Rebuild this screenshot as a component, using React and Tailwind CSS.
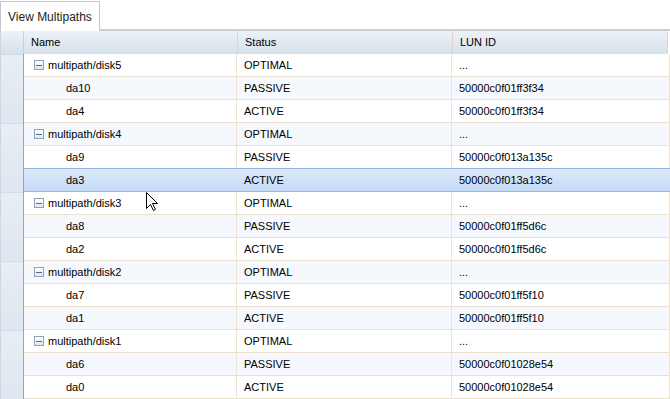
import React from "react";

const groups = [
  { name: "multipath/disk5", kids: [["da10", "PASSIVE", "50000c0f01ff3f34"], ["da4", "ACTIVE", "50000c0f01ff3f34"]] },
  { name: "multipath/disk4", kids: [["da9", "PASSIVE", "50000c0f013a135c"], ["da3", "ACTIVE", "50000c0f013a135c"]] },
  { name: "multipath/disk3", kids: [["da8", "PASSIVE", "50000c0f01ff5d6c"], ["da2", "ACTIVE", "50000c0f01ff5d6c"]] },
  { name: "multipath/disk2", kids: [["da7", "PASSIVE", "50000c0f01ff5f10"], ["da1", "ACTIVE", "50000c0f01ff5f10"]] },
  { name: "multipath/disk1", kids: [["da6", "PASSIVE", "50000c0f01028e54"], ["da0", "ACTIVE", "50000c0f01028e54"]] },
];

// flatten groups into grid rows
const rows = [];
groups.forEach((g) => {
  rows.push({ group: true, name: g.name, status: "OPTIMAL", lun: "..." });
  g.kids.forEach(([name, status, lun]) => rows.push({ group: false, name, status, lun }));
});

const SELECTED = "da3";

const MinusBox = () => (
  <span className="inline-flex items-center justify-center w-[10px] h-[10px] mr-[4px] border border-[#8fa2ba] bg-gradient-to-b from-white to-[#dfe7f1]">
    <span className="block w-[6px] h-[1px] bg-[#4f6b8f]" />
  </span>
);

const Cursor = () => (
  <svg className="absolute left-[146px] top-[192px]" width="13" height="20" viewBox="0 0 13 20">
    <path
      d="M0.5 0.5 L0.5 16.5 L4.5 12.5 L7.5 18.5 L9.5 17.5 L6.5 11.5 L11.5 11.5 Z"
      fill="#fff"
      stroke="#000"
      strokeWidth="1"
      strokeLinejoin="miter"
    />
  </svg>
);

export default function App() {
  return (
    <div className="relative w-[670px] h-[399px] overflow-hidden bg-white text-[11px] text-black font-['Liberation_Sans',Arial,sans-serif]">
      {/* Tab strip */}
      <div className="flex items-end h-[31px] pt-[1px] border-b-2 border-[#cbced3]">
        <div className="relative -mb-[2px] h-[30px] w-[100px] flex items-center pl-[7px] border border-b-0 border-[#c3c6cc] bg-white text-[12px] text-[#222]">
          View Multipaths
        </div>
      </div>

      {/* Header */}
      <div className="flex h-[23px]">
        <div className="w-[24px] border-l border-l-[#cfd6df] border-r border-r-[#d9cdbd] bg-gradient-to-b from-[#edf2f7] to-[#d6e1eb]" />
        <div className="w-[214px] flex items-center pl-[7px] border-r border-[#e2d5c3] bg-gradient-to-b from-[#edf2f7] to-[#d6e1eb]">Name</div>
        <div className="w-[215px] flex items-center pl-[7px] border-r border-[#e2d5c3] bg-gradient-to-b from-[#edf2f7] to-[#d6e1eb]">Status</div>
        <div className="w-[215px] flex items-center pl-[7px] border-r border-[#e2d5c3] bg-gradient-to-b from-[#edf2f7] to-[#d6e1eb]">LUN ID</div>
      </div>

      {/* Body */}
      <div className="flex">
        <div className="flex flex-col w-[24px] border-l border-l-[#cfd6df] border-r border-r-[#a3a3a3]">
          {groups.map((g) => (
            <div key={g.name} className="h-[69px] shrink-0 bg-gradient-to-b from-[#e8eef5] to-[#dfe6ef] border-t border-[#d3dbe5]" />
          ))}
        </div>
        <div className="flex flex-col">
          {rows.map((r, i) => {
            const selected = r.name === SELECTED;
            const beforeSelected = rows[i + 1] && rows[i + 1].name === SELECTED;
            const fill = selected
              ? "bg-gradient-to-b from-[#dde9fa] to-[#c4daf5]"
              : i % 2 === 1
              ? "bg-[#f5f8fd]"
              : "bg-white";
            const line = selected || beforeSelected ? "border-b border-[#93b5e0]" : "border-b border-[#ebdfcd]";
            const sep = selected ? "" : "border-r border-[#eee3d4]";
            return (
              <div key={i} className={`flex h-[23px] shrink-0 ${fill} ${line}`}>
                <div className={`w-[213px] flex items-center ${r.group ? "pl-[10px]" : "pl-[42px]"} ${sep}`}>
                  {r.group && <MinusBox />}
                  {r.name}
                </div>
                <div className={`w-[215px] flex items-center pl-[7px] ${sep}`}>{r.status}</div>
                <div className={`w-[218px] flex items-center pl-[7px] ${sep}`}>{r.lun}</div>
              </div>
            );
          })}
        </div>
      </div>

      <Cursor />
    </div>
  );
}
